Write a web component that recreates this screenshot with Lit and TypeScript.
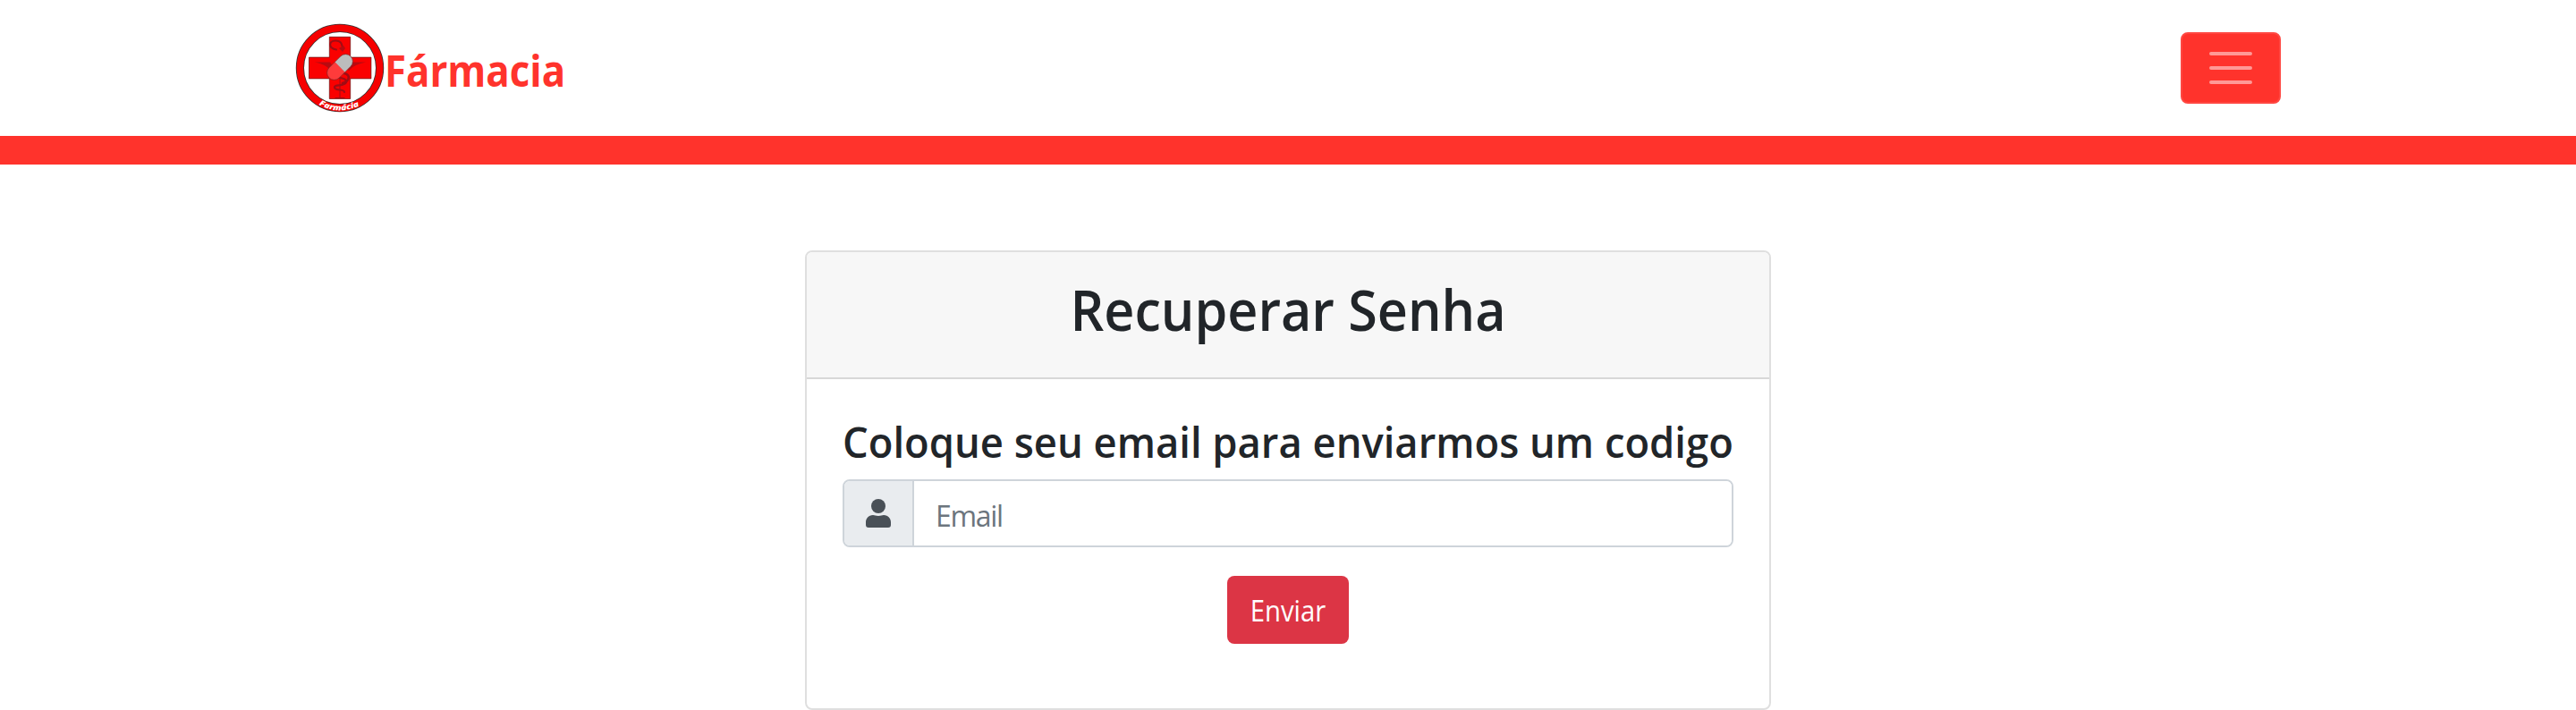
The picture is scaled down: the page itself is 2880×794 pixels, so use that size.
import { LitElement, html, css } from "lit";
import { customElement } from "lit/decorators.js";

@customElement("pharmacy-logo")
class PharmacyLogo extends LitElement {
  static styles = css`
    :host { display: block; width: 100px; height: 100px; }
    .mark { display: block; width: 100%; height: 100%; }
    .caption { font: italic 900 8.5px "Open Sans", sans-serif; }
  `;
  render() {
    return html`
      <svg class="mark" viewBox="330 26 100 100" role="img" aria-label="Farmácia">
        <circle cx="380" cy="76" r="44.6" fill="#fff" stroke="#333" stroke-width="9.2" />
        <circle cx="380" cy="76" r="44.6" fill="none" stroke="#f60000" stroke-width="7.6" />
        <path d="M368.3 41.3h23.4v22.8h23.2v23.8h-23.2v22.6h-23.4V87.900h-22.800V64.100h22.800z" fill="#fa0000" stroke="#651010" stroke-width=".7" />
        <g fill="none" stroke="#a00c14" stroke-linecap="round">
          <path d="M376 55.500C367 54 367 46 375 45.500c8-.3 7 6 8.500 9" stroke-width="2" />
          <path d="M372 80c-3 9 17 5 15 12-2 5-14 2-13 6 1 4 11 1 11 5" stroke-width="2.200" />
          <path d="M385 82c8 2 5 9-2 11" stroke-width="2.600" />
          <path d="M380 66v43M375 109.500h10" stroke-width="1" />
        </g>
        <path d="M384 51l-5 3 4 4 3-4zM352 69.500h17c3 4 3 7 1 10-4-6-10-8-18-10zM409 69.500h-17c-3 4-4 7-2 10 4-6 11-8 19-10z" fill="#b80a10" />
        <g transform="rotate(-45 380 75)">
          <path d="M380 67h-9a8 8 0 0 0 0 16h9z" fill="#ff3b3b" />
          <path d="M380 67h9a8 8 0 0 1 0 16h-9z" fill="#bcbcbc" />
          <rect x="363" y="67" width="34" height="16" rx="8" fill="none" stroke="#6b3030" stroke-width=".6" />
        </g>
        <path d="M354 113.500Q380 130 407 113.500L404 117Q380 132 357 117Z" fill="#f60000" />
        <path id="arc" d="M354 115.500Q380 132 410 114" fill="none" />
        <text class="caption" fill="#fff"><textPath href="#arc" textLength="47" lengthAdjust="spacingAndGlyphs" startOffset="3">Farmácia</textPath></text>
      </svg>`;
  }
}

@customElement("app-root")
class AppRoot extends LitElement {
  static styles = css`
    :host { display: block; height: 794px; overflow: hidden; background: #fff; color: #212529;
      font-family: "Open Sans", sans-serif; font-size: 32px; line-height: 48px; }
    * { box-sizing: border-box; }
    .navbar { height: 184px; border-bottom: 32px solid #ff332c; display: flex; justify-content: space-between; align-items: center; padding: 0 330px; }
    .brand { display: flex; align-items: center; color: #ff332c; font: 700 48px/72px "Open Sans", sans-serif; text-decoration: none; }
    .name { padding-top: 6px; transform: scaleX(.912); transform-origin: left; }
    .toggler { width: 112px; height: 80px; padding: 0; border: 2px solid #ff4741; border-radius: 8px; background: #ff332c; display: grid; place-items: center; }
    .bars { display: block; width: 60px; height: 60px; }
    .card { width: 1080px; height: 514px; margin: 96px auto 0; border: 2px solid #dfdfdf; border-radius: 8px; overflow: hidden; }
    .head { height: 142px; background: #f7f7f7; border-bottom: 2px solid #d8d8d8; padding-top: 25px; text-align: center; }
    h2, h4 { margin: 0; font-weight: 600; white-space: nowrap; }
    h2 { font-size: 63px; line-height: 77px; transform: scaleX(.94); }
    .body { padding: 40px; display: flex; flex-direction: column; align-items: center; }
    h4 { font-size: 47px; line-height: 60px; height: 72px; align-self: flex-start; transform: scaleX(.965); transform-origin: left; }
    .group { width: 100%; height: 76px; display: flex; border: 2px solid #ced4da; border-radius: 8px; overflow: hidden; }
    .addon { width: 78px; background: #e9ecef; border-right: 2px solid #ced4da; display: grid; place-items: center; }
    .user { width: 28px; height: 32px; display: block; }
    .field { flex: 1; border: 0; outline: 0; padding: 5px 24px 0; font: inherit; letter-spacing: -1.3px; color: #212529; background: #fff; }
    .field::placeholder { color: #6c757d; opacity: 1; }
    .send { width: 136px; height: 76px; margin-top: 32px; border: 0; border-radius: 8px; background: #dc3545; color: #fff; font: inherit; padding: 2px 0 0; }
    .label { display: block; transform: scaleX(.915); }
  `;
  render() {
    return html`
      <nav class="navbar">
        <a class="brand"><pharmacy-logo></pharmacy-logo><span class="name">Fármacia</span></a>
        <button class="toggler" aria-label="Menu">
          <svg class="bars" viewBox="0 0 30 30"><path d="M4 7h22M4 15h22M4 23h22" stroke="#fff" stroke-opacity=".5" stroke-width="2" stroke-linecap="round" /></svg>
        </button>
      </nav>
      <main class="card">
        <header class="head"><h2>Recuperar Senha</h2></header>
        <section class="body">
          <h4>Coloque seu email para enviarmos um codigo</h4>
          <div class="group">
            <span class="addon"><svg class="user" viewBox="0 0 28 32" fill="#495057"><circle cx="14" cy="8" r="8" /><path d="M8 18c2 0 3 1 6 1s4-1 6-1c5 0 8 4 8 8v3c0 2-1 3-3 3H3c-2 0-3-1-3-3v-3c0-4 3-8 8-8z" /></svg></span>
            <input class="field" type="email" placeholder="Email" />
          </div>
          <button class="send"><span class="label">Enviar</span></button>
        </section>
      </main>`;
  }
}
